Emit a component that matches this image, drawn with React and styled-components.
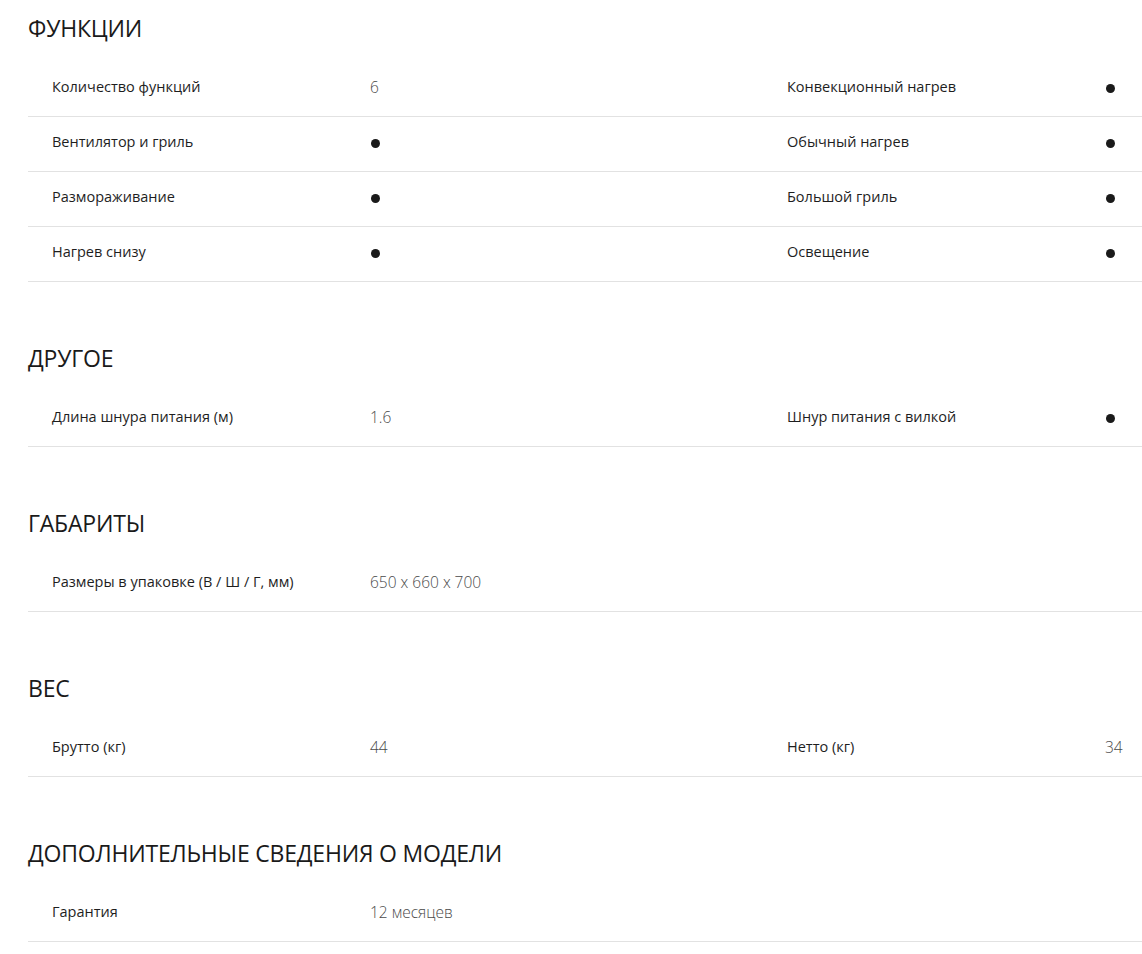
import React from 'react';
import styled, { createGlobalStyle } from 'styled-components';

const GlobalStyle = createGlobalStyle`
  *, *::before, *::after { box-sizing: border-box; }
  body {
    margin: 0;
    background: #fff;
    font-family: 'Open Sans', 'Noto Sans', sans-serif;
    color: #222;
    overflow-x: hidden;
  }
`;

const Page = styled.div`
  padding: 13px 0 0 28px;
  width: 1470px;
`;

const Section = styled.section`
  margin-bottom: 61px;
`;

const Heading = styled.h2`
  margin: 0 0 19px;
  font-size: 23px;
  line-height: 30px;
  font-weight: 500;
  color: #1a1a1a;
  letter-spacing: -0.2px;
`;

const Row = styled.div`
  display: grid;
  grid-template-columns: 735px 735px;
  border-bottom: 1px solid #e2e2e2;
  height: 55px;
  padding-bottom: 5px;
  align-items: center;
`;

const Pair = styled.div`
  display: grid;
  grid-template-columns: 318px 1fr;
  padding-left: 24px;
  align-items: center;
`;

const Label = styled.span`
  font-size: 14.5px;
  font-weight: 500;
  color: #1e1e1e;
`;

const Value = styled.span`
  font-size: 15.5px;
  font-weight: 300;
  color: #4a4a4a;
`;

const Dot = styled.span`
  display: inline-block;
  width: 9px;
  height: 9px;
  border-radius: 50%;
  background: #1a1a1a;
  margin-left: 1px;
  vertical-align: middle;
`;

const sections = [
  {
    title: 'ФУНКЦИИ',
    rows: [
      [['Количество функций', '6'], ['Конвекционный нагрев', true]],
      [['Вентилятор и гриль', true], ['Обычный нагрев', true]],
      [['Размораживание', true], ['Большой гриль', true]],
      [['Нагрев снизу', true], ['Освещение', true]],
    ],
  },
  {
    title: 'ДРУГОЕ',
    rows: [[['Длина шнура питания (м)', '1.6'], ['Шнур питания с вилкой', true]]],
  },
  {
    title: 'ГАБАРИТЫ',
    rows: [[['Размеры в упаковке (В / Ш / Г, мм)', '650 x 660 x 700']]],
  },
  {
    title: 'ВЕС',
    rows: [[['Брутто (кг)', '44'], ['Нетто (кг)', '34']]],
  },
  {
    title: 'ДОПОЛНИТЕЛЬНЫЕ СВЕДЕНИЯ О МОДЕЛИ',
    rows: [[['Гарантия', '12 месяцев']]],
  },
];

const Spec = ({ label, value }) => (
  <Pair>
    <Label>{label}</Label>
    {value === true ? <span><Dot /></span> : <Value>{value}</Value>}
  </Pair>
);

const App = () => (
  <>
    <GlobalStyle />
    <Page>
      {sections.map((s) => (
        <Section key={s.title}>
          <Heading>{s.title}</Heading>
          {s.rows.map((row, i) => (
            <Row key={i}>
              {row.map(([label, value]) => (
                <Spec key={label} label={label} value={value} />
              ))}
            </Row>
          ))}
        </Section>
      ))}
    </Page>
  </>
);

export default App;
